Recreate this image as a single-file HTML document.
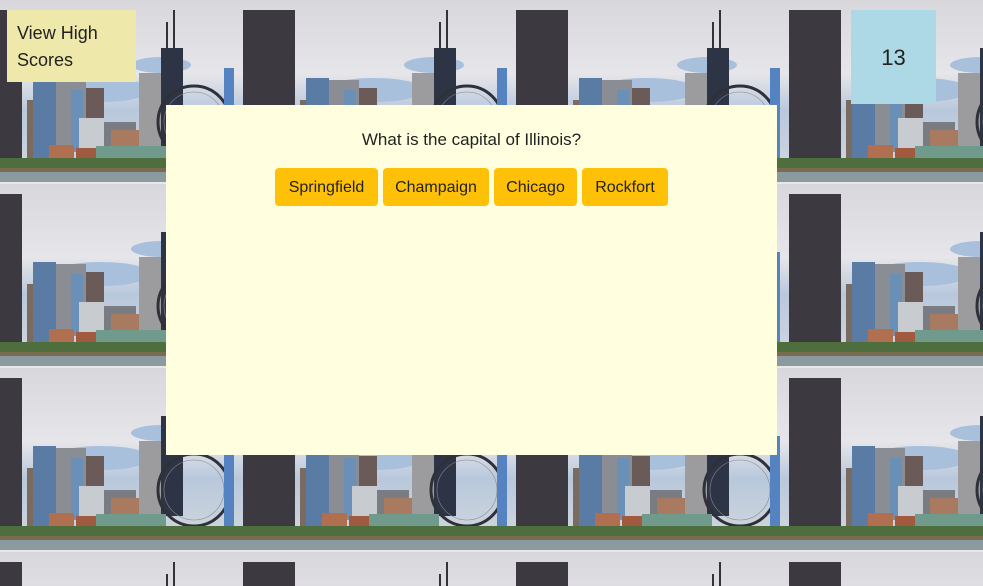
<!DOCTYPE html>
<html><head><meta charset="utf-8"><style>
html,body{margin:0;padding:0;width:983px;height:586px;overflow:hidden;font-family:"Segoe UI","Liberation Sans",sans-serif;}
#bg{position:absolute;left:0;top:0}
.hs{position:absolute;left:7px;top:10px;width:129px;height:72px;background:#eee8aa;box-sizing:border-box;padding:10px 10px;font-size:18px;line-height:27px;color:#222}
.sc{position:absolute;left:851px;top:10px;width:85px;height:94px;background:#add8e6;font-size:22px;color:#222;display:flex;align-items:center;justify-content:center;padding-top:2px;box-sizing:border-box}
.panel{position:absolute;left:166px;top:105px;width:611px;height:350px;background:#ffffe0;text-align:center;color:#222}
.q{position:absolute;top:25px;left:0;width:100%;font-size:17px}
.btns{position:absolute;top:63px;left:109px;display:flex;gap:5px}
.btns div{background:#ffc107;border-radius:4px;height:38px;line-height:40px;font-size:16px;color:#222;box-sizing:border-box}
</style></head><body>
<svg id="bg" width="983" height="586">
<defs>
<linearGradient id="sky" x1="0" y1="0" x2="0" y2="1">
<stop offset="0" stop-color="#d8d8dc"/><stop offset="0.4" stop-color="#e6e6ea"/><stop offset="0.6" stop-color="#b8c8dc"/><stop offset="1" stop-color="#d6dade"/>
</linearGradient>
<pattern id="t" x="-39" y="0" width="273" height="184" patternUnits="userSpaceOnUse">
<rect width="273" height="184" fill="url(#sky)"/>
<ellipse cx="140" cy="90" rx="50" ry="12" fill="#a8c0dc"/>
<ellipse cx="200" cy="65" rx="30" ry="8" fill="#a8c0dc"/>
<rect x="66" y="100" width="10" height="60" fill="#7a6a60"/>
<rect x="72" y="78" width="23" height="80" fill="#5a7ca4"/>
<rect x="95" y="80" width="30" height="72" fill="#8a8e94"/>
<rect x="110" y="90" width="12" height="60" fill="#6a90b8"/>
<rect x="125" y="88" width="18" height="60" fill="#6a5a58"/>
<rect x="140" y="122" width="35" height="30" fill="#7a7c84"/>
<rect x="118" y="118" width="25" height="35" fill="#c8ccd0"/>
<rect x="150" y="130" width="40" height="22" fill="#a87a60"/>
<rect x="178" y="73" width="22" height="80" fill="#9c9c9e"/>
<rect x="200" y="48" width="22" height="100" fill="#2c3446"/>
<rect x="205" y="22" width="2" height="28" fill="#333"/>
<rect x="212" y="10" width="2" height="40" fill="#333"/>
<circle cx="233" cy="122" r="36" fill="none" stroke="#303038" stroke-width="3"/>
<circle cx="233" cy="122" r="30" fill="none" stroke="#888" stroke-width="0.6"/>
<rect x="88" y="145" width="25" height="15" fill="#b07050"/>
<rect x="115" y="148" width="25" height="12" fill="#a05a40"/>
<rect x="135" y="146" width="70" height="16" fill="#6f9a8c"/>
<rect x="9" y="10" width="52" height="160" fill="#3c3a40"/>
<rect x="263" y="68" width="10" height="95" fill="#5582c0"/>
<rect x="0" y="158" width="273" height="12" fill="#4e6e3e"/>
<rect x="0" y="168" width="273" height="4" fill="#7a6a50"/>
<rect x="0" y="172" width="273" height="10" fill="#8a9a9e"/>
<rect x="0" y="182" width="273" height="2" fill="#e8e8ea"/>
</pattern>
</defs>
<rect width="983" height="586" fill="url(#t)"/>
</svg>
<div class="hs">View High<br>Scores</div>
<div class="sc">13</div>
<div class="panel">
<div class="q">What is the capital of Illinois?</div>
<div class="btns">
<div style="width:103px">Springfield</div>
<div style="width:106px">Champaign</div>
<div style="width:83px">Chicago</div>
<div style="width:86px">Rockfort</div>
</div>
</div>
</body></html>
